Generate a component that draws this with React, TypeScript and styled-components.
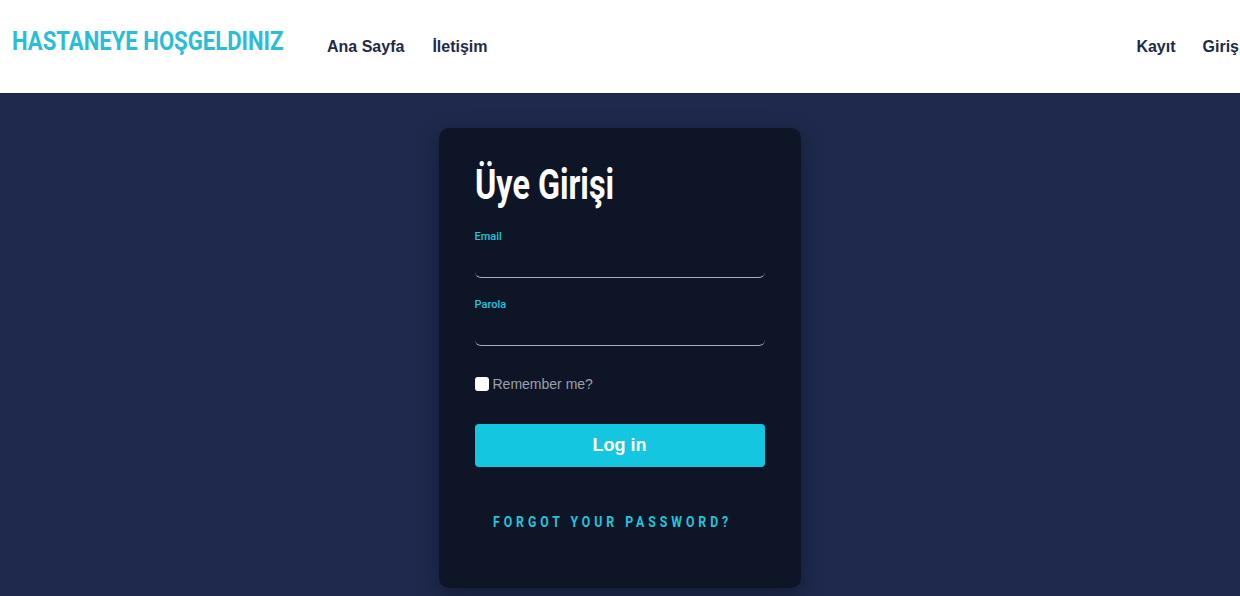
import React from "react";
import styled, { createGlobalStyle } from "styled-components";

const Global = createGlobalStyle`
  html, body { margin: 0; padding: 0; }
  body { background: #1e294d; font-family: "Liberation Sans", Arial, sans-serif; overflow: hidden; }
  * { box-sizing: border-box; }
`;

const Header = styled.header`
  height: 94px;
  background: #ffffff;
  display: flex;
  align-items: flex-start;
  border-bottom: 1px solid #1a2340;
`;

const BrandBox = styled.div`
  width: 272px;
  margin-left: 12px;
  margin-top: 26px;
`;

const Brand = styled.div`
  display: inline-block;
  white-space: nowrap;
  font-family: Roboto, sans-serif;
  font-weight: 700;
  font-size: 26px;
  line-height: 30px;
  color: #29bdd6;
  transform: scaleX(0.85);
  transform-origin: left center;
`;

const Nav = styled.nav`
  display: flex;
  gap: 28px;
  margin-left: 43px;
  margin-top: 38px;
`;

const RightNav = styled(Nav)`
  margin-left: auto;
  margin-right: 1px;
  gap: 27px;
`;

const NavLink = styled.a`
  font-family: "Liberation Sans", Arial, sans-serif;
  font-weight: 700;
  font-size: 16px;
  line-height: 18px;
  color: #212a46;
  text-decoration: none;
  white-space: nowrap;
`;

const Main = styled.main`
  display: flex;
  justify-content: center;
  padding-top: 34px;
  height: 502px;
`;

const Card = styled.section`
  width: 362px;
  height: 460px;
  margin-right: 1px;
  background: #0e1526;
  border-radius: 10px;
  box-shadow: 0 6px 22px rgba(0, 0, 0, 0.35);
  padding: 32px 36px 0 36px;
  display: flex;
  flex-direction: column;
`;

const Title = styled.h1`
  margin: 0;
  font-family: Roboto, sans-serif;
  font-weight: 700;
  font-size: 42px;
  line-height: 50px;
  color: #ffffff;
  white-space: nowrap;
  transform: scaleX(0.77);
  transform-origin: left center;
`;

const Field = styled.div<{ $top: number }>`
  display: flex;
  flex-direction: column;
  margin-top: ${(p) => p.$top}px;
`;

const Label = styled.label`
  font-family: Roboto, sans-serif;
  font-size: 11px;
  line-height: 13px;
  font-weight: 500;
  color: #1fc6dc;
`;

const Input = styled.input`
  height: 35px;
  background: transparent;
  border: none;
  border-bottom: 1px solid #a8adb8;
  border-radius: 6px;
  outline: none;
  color: #fff;
`;

const CheckRow = styled.label`
  display: flex;
  align-items: center;
  gap: 4px;
  margin-top: 30px;
  font-family: "Liberation Sans", Arial, sans-serif;
  font-size: 14px;
  line-height: 16px;
  color: #9aa0ab;
`;

const Box = styled.span`
  width: 14px;
  height: 14px;
  border-radius: 3px;
  background: #ffffff;
  display: inline-block;
`;

const Button = styled.button`
  margin-top: 32px;
  height: 43px;
  border: none;
  border-radius: 4px;
  background: #14c6df;
  color: #ffffff;
  font-family: "Liberation Sans", Arial, sans-serif;
  font-weight: 700;
  font-size: 18px;
`;

const Forgot = styled.a`
  margin-top: 46px;
  margin-left: 18px;
  align-self: flex-start;
  font-family: Roboto, sans-serif;
  font-weight: 700;
  font-size: 15px;
  line-height: 18px;
  letter-spacing: 4.8px;
  color: #1fc6dc;
  white-space: nowrap;
  text-decoration: none;
  transform: scaleX(0.82);
  transform-origin: left center;
`;

export default function App() {
  return (
    <>
      <Global />
      <Header>
        <BrandBox>
          <Brand>HASTANEYE HOŞGELDINIZ</Brand>
        </BrandBox>
        <Nav>
          <NavLink href="#">Ana Sayfa</NavLink>
          <NavLink href="#">İletişim</NavLink>
        </Nav>
        <RightNav>
          <NavLink href="#">Kayıt</NavLink>
          <NavLink href="#">Giriş</NavLink>
        </RightNav>
      </Header>
      <Main>
        <Card>
          <Title>Üye Girişi</Title>
          <Field $top={20}>
            <Label>Email</Label>
            <Input type="text" />
          </Field>
          <Field $top={20}>
            <Label>Parola</Label>
            <Input type="password" />
          </Field>
          <CheckRow>
            <Box />
            Remember me?
          </CheckRow>
          <Button>Log in</Button>
          <Forgot href="#">FORGOT YOUR PASSWORD?</Forgot>
        </Card>
      </Main>
    </>
  );
}
